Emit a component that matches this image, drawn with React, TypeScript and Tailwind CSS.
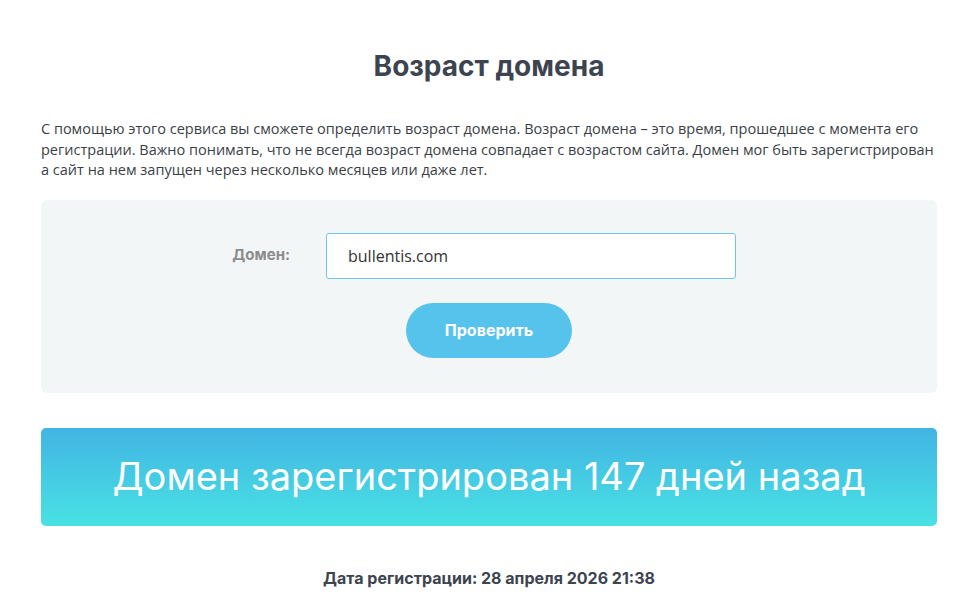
import React from 'react';

export default function App() {
  const [domain, setDomain] = React.useState('bullentis.com');

  return (
    <div className="min-h-screen bg-white">
      <div className="ml-[41px] w-[896px] pt-[48px]">
        <h1 className="text-center font-['Inter',sans-serif] text-[28px] leading-[36px] font-bold text-[#3d4450]">
          Возраст домена
        </h1>

        <p className="mt-[35px] font-['Open_Sans',sans-serif] text-[14.5px] leading-[20.5px] text-[#3a3f47]">
          С помощью этого сервиса вы сможете определить возраст домена. Возраст домена – это время, прошедшее с момента его
          <br />
          регистрации. Важно понимать, что не всегда возраст домена совпадает с возрастом сайта. Домен мог быть зарегистрирован
          <br />
          а сайт на нем запущен через несколько месяцев или даже лет.
        </p>

        <div className="mt-[19px] h-[193px] rounded-md bg-[#f3f6f7] pt-[33px]">
          <div className="flex items-center">
            <label className="w-[285px] pr-[36px] text-right font-['Inter',sans-serif] text-[15px] font-bold text-[#8c8c8c]">
              Домен:
            </label>
            <input
              value={domain}
              onChange={(e) => setDomain(e.target.value)}
              className="h-[46px] w-[410px] rounded-[3px] border border-[#6cc5ec] bg-white px-[21px] font-['Open_Sans',sans-serif] text-[16px] text-[#333] outline-none"
            />
          </div>
          <div className="mt-[24px] flex justify-center">
            <button className="h-[55px] w-[166px] rounded-full bg-[#55c3eb] font-['Inter',sans-serif] text-[16px] font-bold text-white">
              Проверить
            </button>
          </div>
        </div>

        <div className="mt-[35px] flex h-[98px] items-center justify-center rounded-[5px] bg-gradient-to-b from-[#42b4e3] to-[#49e2e3]">
          <span className="font-['Inter',sans-serif] text-[38px] font-normal text-white">
            Домен зарегистрирован 147 дней назад
          </span>
        </div>

        <div className="mt-[40px] text-center font-['Inter',sans-serif] text-[16px] font-bold text-[#3d4450]">
          Дата регистрации: 28 апреля 2026 21:38
        </div>
      </div>
    </div>
  );
}
